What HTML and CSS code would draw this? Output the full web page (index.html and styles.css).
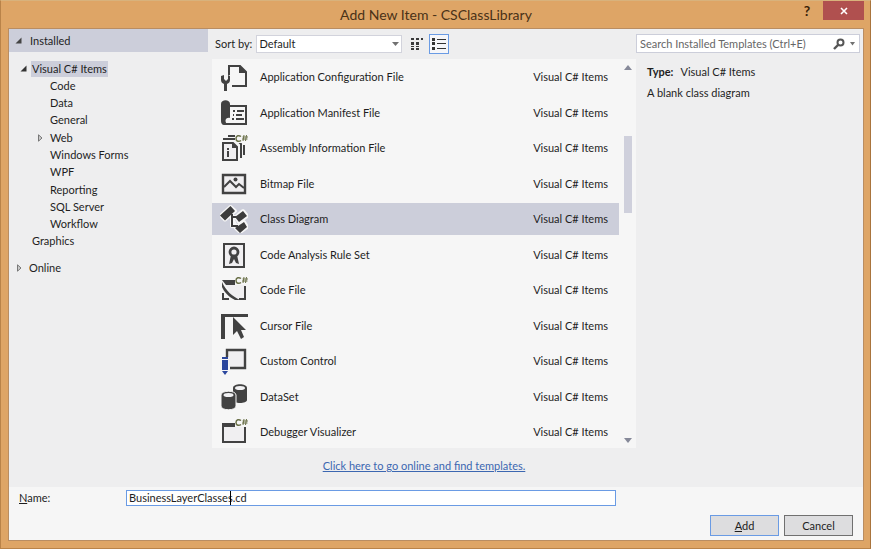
FILE: index.html
```html
<!DOCTYPE html>
<html lang="en">
<head>
<meta charset="utf-8">
<title>Add New Item - CSClassLibrary</title>
<link rel="stylesheet" href="styles.css">
</head>
<body>
<div class="window">
  <header class="titlebar">
    <h1 class="title">Add New Item - CSClassLibrary</h1>
    <div class="window-buttons">
      <button class="help" type="button" aria-label="Help">?</button>
      <button class="close" type="button" aria-label="Close"><svg width="8" height="8" viewBox="0 0 8 8"><path d="M1 1l6 6M7 1L1 7" stroke="#fff" stroke-width="1.6"/></svg></button>
    </div>
  </header>
  <form class="client">
    <div class="main">
      <nav class="sidebar">
        <h2 class="group-head"><svg class="arrow" width="7" height="7" viewBox="0 0 7 7"><path d="M6.500 .5v6h-6z" fill="#444"/></svg>Installed</h2>
        <ul class="tree">
          <li class="root"><svg class="arrow" width="7" height="7" viewBox="0 0 7 7"><path d="M6.500 .5v6h-6z" fill="#333"/></svg><span class="picked">Visual C# Items</span></li>
          <li>Code</li>
          <li>Data</li>
          <li>General</li>
          <li class="branch"><svg class="arrow" width="5" height="8" viewBox="0 0 5 8"><path d="M.5 .8v6.400l3.500-3.200z" fill="#ccc" stroke="#777"/></svg>Web</li>
          <li>Windows Forms</li>
          <li>WPF</li>
          <li>Reporting</li>
          <li>SQL Server</li>
          <li>Workflow</li>
          <li class="top">Graphics</li>
        </ul>
        <h2 class="group-online"><svg class="arrow" width="5" height="8" viewBox="0 0 5 8"><path d="M.5 .8v6.400l3.500-3.200z" fill="#ccc" stroke="#777"/></svg>Online</h2>
      </nav>

      <section class="center">
        <div class="toolbar">
          <label for="sort">Sort by:</label>
          <div class="select-box">
            <select id="sort"><option>Default</option></select>
            <svg class="caret" width="7" height="4" viewBox="0 0 7 4"><path d="M0 0h7L3.500 4z" fill="#717171"/></svg>
          </div>
          <button class="view" type="button" aria-label="Small icons"><svg width="14" height="14" viewBox="0 0 14 14" fill="#3a3a3a"><path d="M1 1h3v2H1zM6 1h3v2H6zM11 1h2v2h-2zM1 5h3v3H1zM6 5h3v3H6zM1 9h3v1H1zM6 9h3v1H6zM1 11h3v2H1zM6 11h3v2H6z"/></svg></button>
          <button class="view active" type="button" aria-label="Medium icons"><svg width="14" height="14" viewBox="0 0 14 14" fill="#333"><path d="M0 1h3v3H0zM0 5h3v3H0zM0 10h3v3H0zM5 2h9v1H5zM5 6h9v1H5zM5 11h9v1H5z"/></svg></button>
        </div>
        <div class="list-panel">
          <ul class="list">
            <li><svg class="icon" viewBox="0 0 28 28"><path d="M9 12V3h11l6 6v14H12" fill="none" stroke="#424242" stroke-width="2"/><path d="M19 2l8 8h-8z" fill="#424242"/><path d="M1 13v4c0 2 1 3 3 4v7h3v-7c2-1 3-2 3-4v-4l-2-1v4l-2 2-2-2v-4z" fill="#424242"/></svg><span>Application Configuration File</span><span class="kind">Visual C# Items</span></li>
            <li><svg class="icon" viewBox="0 0 28 28"><path d="M1 5c0-5 9-5 9 0v14c-4-1-6 3-3 6v1H4c-2 0-3-2-3-4z" fill="#424242"/><path d="M10 7h16v18H6" fill="none" stroke="#424242" stroke-width="2"/><path d="M13 11h2v2h-2zM17 11h7v2h-7zM13 15h1v2h-1zM16 15h6v2h-6zM12 19h2v2h-2zM16 19h8v2h-8z" fill="#424242"/></svg><span>Application Manifest File</span><span class="kind">Visual C# Items</span></li>
            <li><svg class="icon" viewBox="0 0 28 28"><path d="M3 9h10l4 4v13H3z" fill="#f0eff1" stroke="#424242" stroke-width="2"/><path d="M12 8l6 6h-6zM7 14h2v2H7zM7 17h2v6H7z" fill="#424242"/><path d="M3 5h13l5 5v14M8 2h8M24 11v10" fill="none" stroke="#424242" stroke-width="2"/><use href="#cs"/></svg><span>Assembly Information File</span><span class="kind">Visual C# Items</span></li>
            <li><svg class="icon" viewBox="0 0 28 28"><path d="M3 5h22v18H3z" fill="#f0eff1" stroke="#424242" stroke-width="2.400"/><path d="M4 17l6-6 6 6 3-3 5 4" fill="none" stroke="#424242" stroke-width="2"/><circle cx="15.500" cy="9.500" r="2" fill="#424242"/></svg><span>Bitmap File</span><span class="kind">Visual C# Items</span></li>
            <li class="selected"><svg class="icon" viewBox="0 0 28 28"><g fill="#f6f6f6" stroke="#f6f6f6" stroke-linejoin="round" stroke-width="4"><path d="M1 10.500L10.500 2 15 6 5 14.500zM16 12l7-6 4 5-8 6zM16 23l8-6 3 5-7 5zM12 9v12h6M12 12h6"/></g><path d="M0 10.500L10.500 1 15 6 5 15.500zM15 12l8-6 4 5-8 6zM15 23l9-6 3 5-7 6z" fill="#3c3c3c"/><path d="M12 9v12h6M12 12h6" fill="none" stroke="#3c3c3c" stroke-width="2"/></svg><span>Class Diagram</span><span class="kind">Visual C# Items</span></li>
            <li><svg class="icon" viewBox="0 0 28 28"><path d="M4 3h20v23H4z" fill="#f0eff1" stroke="#424242" stroke-width="2"/><circle cx="14" cy="11" r="4" fill="none" stroke="#424242" stroke-width="2.800"/><path d="M11 14h6l2 9-3-1-2-4-2 4-3 1z" fill="#424242"/></svg><span>Code Analysis Rule Set</span><span class="kind">Visual C# Items</span></li>
            <li><svg class="icon" viewBox="0 0 28 28"><path d="M5 8h20v15H14z" fill="#f0eff1"/><path d="M2 4h13v5H6z" fill="#424242"/><path d="M3 17v6h6M19 23h6V10" fill="none" stroke="#424242" stroke-width="2"/><path d="M2 6c4 9 10 14 18 18h-5C9 21 4 16 2 11z" fill="#424242"/><use href="#cs"/></svg><span>Code File</span><span class="kind">Visual C# Items</span></li>
            <li><svg class="icon" viewBox="0 0 28 28"><path d="M1 2h27v3H5v22H1z" fill="#424242"/><path d="M13 5v18l4-4 4 8 3-2-3-7h5z" fill="#424242"/></svg><span>Cursor File</span><span class="kind">Visual C# Items</span></li>
            <li><svg class="icon" viewBox="0 0 28 28"><path d="M7 10V3h18v18H10" fill="#f0eff1" stroke="#424242" stroke-width="2.400"/><path d="M2 10h6v2H2zM2 13h6v10H2zM2 24h6l-3 4z" fill="#2b479e"/></svg><span>Custom Control</span><span class="kind">Visual C# Items</span></li>
            <li><svg class="icon" viewBox="0 0 28 28"><path d="M13 5c0-5 14-5 14 0v12c0 4-14 4-14 0z" fill="#424242"/><ellipse cx="20" cy="5" rx="5" ry="2" fill="#f2f2f4"/><path d="M1 12c0-5 15-5 15 0v11c0 5-15 5-15 0z" fill="#424242" stroke="#f6f6f6"/><ellipse cx="8.500" cy="12" rx="5" ry="2" fill="#f2f2f4"/></svg><span>DataSet</span><span class="kind">Visual C# Items</span></li>
            <li><svg class="icon" viewBox="0 0 28 28"><path d="M3 6h22v18H3z" fill="#f0eff1" stroke="#424242" stroke-width="2"/><path d="M2 5h24v4H2z" fill="#424242"/><use href="#cs"/></svg><span>Debugger Visualizer</span><span class="kind">Visual C# Items</span></li>
          </ul>
          <div class="scrollbar">
            <svg width="8" height="5" viewBox="0 0 8 5"><path d="M4 0l4 5H0z" fill="#868999"/></svg>
            <div class="track"><div class="thumb"></div></div>
            <svg width="8" height="5" viewBox="0 0 8 5"><path d="M0 0h8L4 5z" fill="#868999"/></svg>
          </div>
        </div>
        <p class="online"><a href="#">Click here to go online and find templates.</a></p>
      </section>

      <aside class="details">
        <div class="search">
          <input type="search" aria-label="Search Installed Templates" placeholder="Search Installed Templates (Ctrl+E)">
          <svg width="12" height="12" viewBox="0 0 12 12"><circle cx="7.500" cy="4.500" r="3" fill="none" stroke="#555" stroke-width="2"/><path d="M5 7l-4 4" stroke="#555" stroke-width="2.400"/></svg>
          <svg width="5" height="4" viewBox="0 0 5 4"><path d="M0 0h5L2.500 3.500z" fill="#717171"/></svg>
        </div>
        <div class="info">
          <p><b>Type:</b>Visual C# Items</p>
          <p>A blank class diagram</p>
        </div>
      </aside>
    </div>

    <footer class="footer">
      <div class="name-row">
        <label for="name"><u>N</u>ame:</label>
        <div class="name-box"><input id="name" type="text" value="BusinessLayerClasses.cd"><i class="text-cursor"></i></div>
      </div>
      <div class="actions">
        <button class="add" type="submit"><u>A</u>dd</button>
        <button type="button">Cancel</button>
      </div>
    </footer>
  </form>
</div>

<svg width="0" height="0" class="defs" aria-hidden="true">
  <defs>
    <g id="cs"><path d="M15 0h13v9H15z" fill="#f6f6f6"/><path d="M21 2.500c-2-1.500-5-1-5 2s3 3.500 5 2" fill="none" stroke="#6a7048" stroke-width="1.500"/><path d="M24 1l-1 6M26.500 1l-1 6M22.500 3H28M22 5h5.500" stroke="#6a7048"/></g>
  </defs>
</svg>
</body>
</html>
```
FILE: styles.css
```css
* { box-sizing: border-box; }

body {
  margin: 0;
  font: 11px/16px Lato, "Open Sans", sans-serif;
  color: #1e1e1e;
}

h1, h2, p, ul { margin: 0; padding: 0; font-size: inherit; font-weight: normal; list-style: none; }
button, input, select { font: inherit; color: inherit; }
svg { display: block; flex: none; }
.defs { position: absolute; }

.window {
  display: flex;
  flex-direction: column;
  min-height: 100vh;
  padding: 0 6px 7px 7px;
  background: #dea566;
  border: 1px solid #b98349;
  border-top-color: #d8b27c;
  border-right-color: #a9743c;
}

.titlebar {
  display: grid;
  grid-template-columns: 1fr auto 1fr;
  height: 27px;
}
.title {
  grid-column: 2;
  font-size: 14px;
  line-height: 28px;
  color: #4a3218;
}
.window-buttons {
  display: flex;
  justify-content: flex-end;
  align-items: flex-start;
  gap: 8px;
}
.help, .close { height: 19px; padding: 0; border: 0; }
.help { width: 16px; background: none; font-size: 14px; font-weight: bold; color: #3a2208; }
.close {
  display: grid;
  place-items: center;
  width: 41px;
  background: #b0504f;
}

.client {
  display: flex;
  flex: 1;
  flex-direction: column;
  background: #f6f6f6;
  border: 1px solid #b98d62;
}
.main {
  display: grid;
  flex: 1;
  grid-template-columns: 199px minmax(0, 1fr) 227px;
  background: #eeeeef;
}

.group-head {
  display: flex;
  align-items: center;
  gap: 8px;
  height: 23px;
  padding-left: 6px;
  background: #ccceda;
}
.tree {
  display: grid;
  grid-auto-rows: 1fr;
  align-items: center;
  height: 190px;
  margin-top: 8px;
}
.tree li { padding-left: 41px; }
.tree .root, .tree .branch { display: flex; align-items: center; }
.tree .root { gap: 4px; padding-left: 11px; }
.tree .branch { gap: 7px; padding-left: 29px; }
.tree .top { padding-left: 23px; }
.picked { padding: 0 1px; background: #ccceda; }
.group-online {
  display: flex;
  align-items: center;
  gap: 7px;
  margin-top: 10px;
  padding-left: 8px;
}

.center { display: flex; flex-direction: column; padding-left: 4px; }
.toolbar {
  display: flex;
  align-items: center;
  height: 30px;
  padding-left: 3px;
}
.toolbar label { min-width: 37px; }
.select-box { position: relative; width: 146px; margin: 0 5px 0 4px; }
.select-box select {
  display: block;
  width: 100%;
  height: 18px;
  padding: 0 2px;
  line-height: 16px;
  appearance: none;
  background: #fff;
  border: 1px solid #d2d3dc;
  border-radius: 0;
}
.caret { position: absolute; top: 7px; right: 3px; pointer-events: none; }
.view {
  display: grid;
  place-items: center;
  width: 20px;
  height: 20px;
  padding: 0;
  background: none;
  border: 1px solid transparent;
}
.view + .view { margin-left: 2px; }
.view.active { background: #f6f6f9; border-color: #6a9be4; }

.list-panel {
  display: flex;
  flex: 1;
  background: #f6f6f6;
}
.list {
  display: flex;
  flex: 1;
  flex-direction: column;
  justify-content: space-between;
  padding-top: 2px;
}
.list li {
  display: flex;
  align-items: center;
  gap: 12px;
  height: 32px;
  padding: 0 11px 0 8px;
}
.icon { width: 28px; height: 28px; }
.kind { margin-left: auto; }
.selected { background: #ccceda; }
.scrollbar {
  display: flex;
  flex-direction: column;
  align-items: center;
  width: 17px;
  padding: 6px 0 5px;
}
.track { flex: 1; width: 8px; padding-top: 66px; }
.thumb { height: 77px; background: #cfd0dc; }
.online { padding: 10px 0 13px; text-align: center; }
.online a { color: #3c67b1; }

.search {
  display: flex;
  align-items: center;
  gap: 5px;
  height: 19px;
  margin: 5px 3px 0 0;
  padding: 0 4px 0 3px;
  background: #fff;
  border: 1px solid #ccceda;
}
.search input {
  flex: 1;
  min-width: 0;
  padding: 0;
  background: none;
  border: 0;
  outline: 0;
}
.search input::placeholder { color: #666; opacity: 1; }
.info {
  display: grid;
  gap: 5px;
  padding: 11px;
}
.info b { margin-right: 7px; }

.footer { padding: 3px 10px 4px; }
.name-row {
  display: grid;
  grid-template-columns: 107px minmax(0, 1fr);
  align-items: center;
  padding-right: 237px;
}
.name-box { position: relative; }
.name-box input {
  display: block;
  width: 100%;
  height: 16px;
  padding: 0 2px;
  background: #fff;
  border: 1px solid #6a9be4;
  outline: 0;
}
.text-cursor {
  position: absolute;
  top: 1px;
  left: 104px;
  width: 1px;
  height: 14px;
  background: #000;
}
.actions {
  display: flex;
  justify-content: flex-end;
  gap: 5px;
  margin-top: 9px;
}
.actions button {
  width: 69px;
  height: 21px;
  padding: 0;
  background: #dddddf;
  border: 1px solid #707070;
}
.actions .add { border-color: #6a9be4; }
```
